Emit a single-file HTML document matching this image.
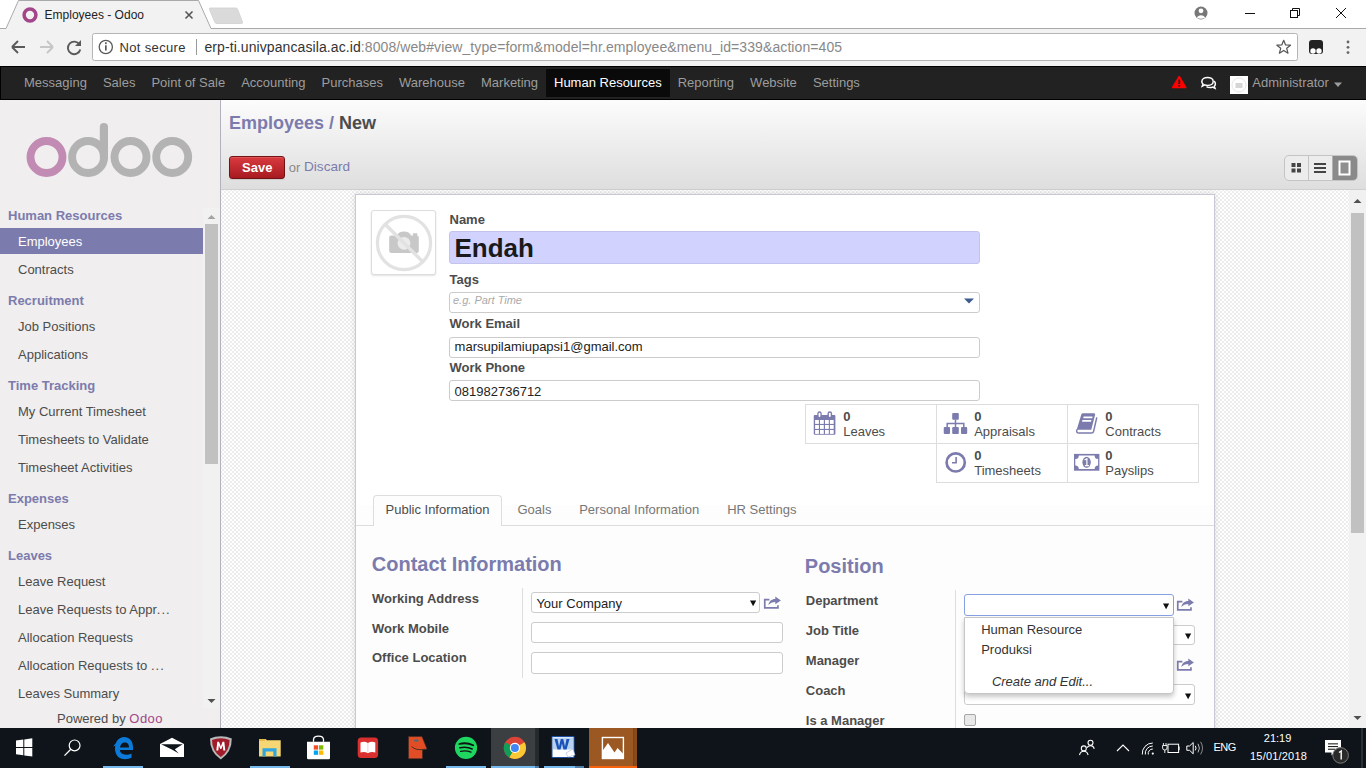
<!DOCTYPE html>
<html><head><meta charset="utf-8">
<style>
*{box-sizing:border-box;margin:0;padding:0}
html,body{width:1366px;height:768px;overflow:hidden;background:#fff;font-family:"Liberation Sans",sans-serif;font-size:13px;color:#4c4c4c}
.a{position:absolute}
.t{position:absolute;white-space:nowrap;line-height:1}
/* chrome */
#tabstrip{left:0;top:0;width:1366px;height:28px;background:#fff}
#toolbar{left:0;top:28px;width:1366px;height:38px;background:#f2f2f2;border-top:1px solid #b8b8b8}
#addr{left:92px;top:33px;width:1206px;height:28px;background:#fff;border:1px solid #c0c0c0;border-radius:2px}
/* odoo nav */
#nav{left:0;top:66px;width:1366px;height:34px;background:#222;border-top:1px solid #000;border-bottom:1px solid #000;border-left:1px solid #000}
.nv{position:absolute;top:75.7px;color:#9d9d9d;font-size:13px;line-height:1;white-space:nowrap}
/* sidebar */
#side{left:0;top:100px;width:221px;height:628px;background:#f0eeee;border-right:1px solid #b3b1bb}
.sh{position:absolute;left:8px;color:#7c7bad;font-weight:bold;font-size:13px;line-height:1;white-space:nowrap}
.si{position:absolute;left:18px;color:#4c4c4c;font-size:13px;line-height:1;white-space:nowrap}
/* header */
#hdr{left:221px;top:100px;width:1145px;height:90px;background:linear-gradient(#fcfcfc,#dedede);border-bottom:1px solid #cfcfcf}
#content{left:221px;top:190px;width:1128px;height:538px;background-color:#fff;background-image:repeating-conic-gradient(#ededed 0 25%,#fff 0 50%);background-size:4px 4px;background-position:3px 3px}
#vscroll{left:1349px;top:190px;width:17px;height:538px;background:#f1f1f1}
#sheet{left:355px;top:194px;width:860px;height:540px;background:#fff;border:1px solid #c9c9d6;box-shadow:0 0 6px rgba(0,0,0,.13)}
/* taskbar */
#task{left:0;top:728px;width:1366px;height:40px;background:#0e1419}
</style></head>
<body>

<svg class="a" style="left:0;top:0" width="1366" height="66">
  <path d="M0 28.5 H6 L18.5 0.5 H198.5 L211 28.5 H1366 V66 H0 Z" fill="#f2f2f2"/>
  <path d="M0 28.5 H6 L18.5 0.5 H198.5 L211 28.5 H1366" fill="none" stroke="#a9a9a9" stroke-width="1"/>
  <circle cx="30" cy="15" r="5.9" fill="none" stroke="#a24689" stroke-width="3.5"/>
  <path d="M185.5 11.5 L192.5 18.5 M192.5 11.5 L185.5 18.5" stroke="#555" stroke-width="1.6"/>
  <path d="M210 8 H236 Q237 8 237.5 9 L242.5 22 Q243 23.5 241.5 23.5 H216.5 Q215.5 23.5 215 22.5 L209.5 9.5 Q209 8 210 8 Z" fill="#dadada" stroke="#cfcfcf" stroke-width="0.8"/>
  <!-- window controls -->
  <circle cx="1201" cy="13" r="6.5" fill="#777"/>
  <circle cx="1201" cy="10.8" r="2.4" fill="#fff"/>
  <path d="M1196.6 17.6 Q1201 12.8 1205.4 17.6 Q1201 20 1196.6 17.6Z" fill="#fff"/>
  <path d="M1245 13.5 H1255" stroke="#111" stroke-width="1"/>
  <rect x="1290.5" y="10.5" width="7" height="7" fill="none" stroke="#111" stroke-width="1"/>
  <path d="M1292.5 10.5 V8.5 H1299.5 V15.5 H1297.5" fill="none" stroke="#111" stroke-width="1"/>
  <path d="M1336 8 L1346 18 M1346 8 L1336 18" stroke="#111" stroke-width="1"/>
  <!-- nav buttons -->
  <path d="M12 47 H25 M12 47 L18 41 M12 47 L18 53" fill="none" stroke="#5a5a5a" stroke-width="1.9"/>
  <path d="M53 47 H40 M53 47 L47 41 M53 47 L47 53" fill="none" stroke="#c6c6c6" stroke-width="1.9"/>
  <path d="M79.5 44.5 A6.3 6.3 0 1 0 80.3 49.5" fill="none" stroke="#5a5a5a" stroke-width="1.9"/>
  <path d="M81 40 V46 H75 Z" fill="#5a5a5a"/>
  <!-- address box -->
  <rect x="92.5" y="33.5" width="1205" height="27" rx="2" fill="#fff" stroke="#b5b5b5"/>
  <circle cx="105.8" cy="47" r="6.6" fill="none" stroke="#5a5a5a" stroke-width="1.3"/>
  <rect x="105" y="45.3" width="1.7" height="5.2" fill="#5a5a5a"/>
  <rect x="105" y="42.3" width="1.7" height="1.8" fill="#5a5a5a"/>
  <path d="M196.5 39 V55" stroke="#9a9a9a" stroke-width="1"/>
  <path d="M1283.7 40.3 L1285.6 45 L1290.5 45.2 L1286.7 48.3 L1288 53.2 L1283.7 50.4 L1279.4 53.2 L1280.7 48.3 L1276.9 45.2 L1281.8 45 Z" fill="none" stroke="#555" stroke-width="1.2" stroke-linejoin="round"/>
  <!-- extension icon -->
  <rect x="1309" y="40" width="14" height="14" rx="3" fill="#222"/>
  <circle cx="1313" cy="51" r="2.7" fill="#fff"/>
  <circle cx="1319" cy="51" r="2.7" fill="#fff"/>
  <circle cx="1348" cy="42" r="1.4" fill="#666"/>
  <circle cx="1348" cy="47.3" r="1.4" fill="#666"/>
  <circle cx="1348" cy="52.6" r="1.4" fill="#666"/>
</svg>
<div class="t" style="left:44.6px;top:9px;font-size:12px;color:#222">Employees - Odoo</div>
<div class="t" style="left:119.5px;top:40.7px;font-size:13px;color:#333;letter-spacing:0.35px">Not secure</div>
<div class="t" style="left:204.4px;top:39.9px;font-size:14px;color:#333;letter-spacing:0.09px">erp-ti.univpancasila.ac.id<span style="color:#888">:8008/web#view_type=form&amp;model=hr.employee&amp;menu_id=339&amp;action=405</span></div>
<div id="nav" class="a"></div>
<div class="nv" style="left:24.0px">Messaging</div>
<div class="nv" style="left:102.9px">Sales</div>
<div class="nv" style="left:151.4px">Point of Sale</div>
<div class="nv" style="left:241.2px">Accounting</div>
<div class="nv" style="left:321.5px">Purchases</div>
<div class="nv" style="left:398.9px">Warehouse</div>
<div class="nv" style="left:481.0px">Marketing</div>
<div class="a" style="left:546.0px;top:69px;width:123.7px;height:28px;background:#0a0a0a"></div>
<div class="nv" style="left:554.0px;color:#fff">Human Resources</div>
<div class="nv" style="left:677.7px">Reporting</div>
<div class="nv" style="left:750.1px">Website</div>
<div class="nv" style="left:812.9px">Settings</div>
<svg class="a" style="left:1160px;top:66px" width="206" height="34">
  <path d="M19.2 10.6 L25.6 21.4 H12.8 Z" fill="#f00" stroke="#f00" stroke-width="1.8" stroke-linejoin="round"/>
  <rect x="18.4" y="13.6" width="1.7" height="4.4" fill="#222"/>
  <rect x="18.4" y="19" width="1.7" height="1.6" fill="#222"/>
  <path d="M41.8 15.6 C41.8 12.6 45 11.4 47.6 11.4 C50.4 11.4 53.2 12.8 53.2 15.4 C53.2 18 50.4 19.4 47.6 19.4 C46.6 19.4 45.6 19.2 44.8 18.9 L42.2 20.2 L43 18 C42.2 17.4 41.8 16.6 41.8 15.6Z" fill="none" stroke="#fff" stroke-width="1.5"/>
  <path d="M46.5 20.6 C47.5 21.3 48.8 21.6 50 21.6 C51 21.6 51.9 21.4 52.6 21.1 L55 22.3 L54.3 20.2 C55 19.6 55.4 18.8 55.4 17.8 C55.4 16.6 54.9 15.8 54.1 15.2" fill="none" stroke="#fff" stroke-width="1.5"/>
  <rect x="70" y="10" width="18" height="18" fill="#fff"/>
  <circle cx="79" cy="19" r="7" fill="none" stroke="#e6e6e6" stroke-width="1"/>
  <rect x="75.5" y="17" width="7" height="5" fill="#d6d6d6"/>
  <path d="M174 16.5 H182 L178 21 Z" fill="#9d9d9d"/>
</svg>
<div class="nv" style="left:1252.3px">Administrator</div>
<div id="side" class="a"></div>
<svg class="a" style="left:0;top:100px" width="221" height="100">
  <circle cx="46.5" cy="57" r="16" fill="none" stroke="#c28bb4" stroke-width="7.9"/>
  <circle cx="88.1" cy="57" r="16" fill="none" stroke="#b3b3b3" stroke-width="7.9"/>
  <path d="M103.9 57 V27" stroke="#b3b3b3" stroke-width="8.2" stroke-linecap="round"/>
  <circle cx="130.5" cy="57" r="16" fill="none" stroke="#b3b3b3" stroke-width="7.9"/>
  <circle cx="172.2" cy="57" r="16" fill="none" stroke="#b3b3b3" stroke-width="7.9"/>
</svg>
<div class="a" style="left:203px;top:208px;width:17px;height:500px;background:#f1f1f1"></div>
<div class="a" style="left:205px;top:224px;width:13px;height:240px;background:#c1c1c1"></div>
<svg class="a" style="left:203px;top:208px" width="17" height="500">
  <path d="M4.5 11 L8.5 7 L12.5 11 Z" fill="#a3a3a3"/>
  <path d="M4.5 491 L8.5 495 L12.5 491 Z" fill="#505050"/>
</svg>
<div class="a" style="left:0;top:228px;width:203px;height:26px;background:#7c7bad"></div>
<div class="sh" style="top:209.2px">Human Resources</div>
<div class="si" style="top:234.5px;color:#fff">Employees</div>
<div class="si" style="top:262.6px">Contracts</div>
<div class="sh" style="top:293.8px">Recruitment</div>
<div class="si" style="top:319.7px">Job Positions</div>
<div class="si" style="top:347.6px">Applications</div>
<div class="sh" style="top:378.6px">Time Tracking</div>
<div class="si" style="top:404.7px">My Current Timesheet</div>
<div class="si" style="top:432.6px">Timesheets to Validate</div>
<div class="si" style="top:460.5px">Timesheet Activities</div>
<div class="sh" style="top:492.2px">Expenses</div>
<div class="si" style="top:518.0px">Expenses</div>
<div class="sh" style="top:549.1px">Leaves</div>
<div class="si" style="top:575.1px">Leave Request</div>
<div class="si" style="top:603.1px">Leave Requests to Appr<span style="letter-spacing:1px">...</span></div>
<div class="si" style="top:631.1px">Allocation Requests</div>
<div class="si" style="top:659.1px">Allocation Requests to <span style="letter-spacing:1px">...</span></div>
<div class="si" style="top:686.6px">Leaves Summary</div>
<div class="t" style="left:57px;top:711.8px;font-size:13px;color:#4c4c4c">Powered by <span style="color:#a24689;letter-spacing:0.5px">Odoo</span></div>
<div id="hdr" class="a"></div>
<div class="t" style="left:228.9px;top:113.5px;font-size:18px;font-weight:bold;color:#7c7bad">Employees <span style="font-weight:bold">/</span> <span style="color:#4c4c4c">New</span></div>
<div class="a" style="left:229px;top:156px;width:56px;height:23px;border:1px solid #731213;border-radius:3px;background:linear-gradient(#d93a3f,#a71b20);box-shadow:inset 0 1px 0 rgba(255,255,255,.15),0 1px 1px rgba(0,0,0,.1)"></div>
<div class="t" style="left:242.1px;top:160.8px;font-size:13px;font-weight:bold;color:#fff">Save</div>
<div class="t" style="left:288.8px;top:160.8px;font-size:13px;color:#888">or</div>
<div class="t" style="left:304px;top:160.3px;font-size:13.6px;color:#7c7bad">Discard</div>
<div class="a" style="left:1284px;top:155px;width:74px;height:26px;border:1px solid #c4c4c4;border-radius:5px;background:#ececec;overflow:hidden">
  <div class="a" style="left:23px;top:0;width:1px;height:24px;background:#c4c4c4"></div>
  <div class="a" style="left:47px;top:0;width:1px;height:24px;background:#b0b0b0"></div>
  <div class="a" style="left:48px;top:0;width:25px;height:24px;background:#8a8a8a"></div>
</div>
<svg class="a" style="left:1284px;top:155px" width="74" height="26">
  <rect x="7.5" y="8" width="4" height="4" fill="#444"/><rect x="13" y="8" width="4" height="4" fill="#444"/>
  <rect x="7.5" y="13.5" width="4" height="4" fill="#444"/><rect x="13" y="13.5" width="4" height="4" fill="#444"/>
  <rect x="30" y="8" width="12" height="2" fill="#444"/><rect x="30" y="12" width="12" height="2" fill="#444"/><rect x="30" y="16" width="12" height="2" fill="#444"/>
  <rect x="55.5" y="6.5" width="10" height="13" fill="#8f8f8f" stroke="#fff" stroke-width="2"/>
</svg>
<div id="content" class="a"></div>
<div id="vscroll" class="a"></div>
<div id="sheet" class="a"></div>
<div class="a" style="left:356.0px;top:505.0px;width:858.0px;height:223.0px;background:#fdfdfd"></div>
<div class="a" style="left:371.0px;top:210.0px;width:65.0px;height:65.0px;border:1px solid #ddd;border-radius:3px;background:#fff;box-shadow:0 1px 2px rgba(0,0,0,.12)"></div>
<svg class="a" style="left:371px;top:210px" width="65" height="65">
  <path d="M20.3 25.5 H26 Q27.5 21.5 33 21.5 Q38.5 21.5 40 25.5 H45.7 Q47.8 25.5 47.8 27.6 V41 Q47.8 43 45.7 43 H20.3 Q18.2 43 18.2 41 V27.6 Q18.2 25.5 20.3 25.5Z" fill="#c8c8c8"/>
  <rect x="41.8" y="23.3" width="4.6" height="2.6" rx="0.8" fill="#c8c8c8"/>
  <circle cx="33" cy="33.3" r="6.4" fill="#ebebeb"/>
  <circle cx="33" cy="33" r="26.6" fill="none" stroke="#e2e2e2" stroke-width="3.3"/>
  <path d="M14.2 14.2 L51.8 51.8" stroke="#e2e2e2" stroke-width="3.4"/>
</svg>
<div class="t" style="left:449.5px;top:212.7px;font-size:13px;font-weight:bold">Name</div>
<div class="a" style="left:449.0px;top:231.3px;width:531.0px;height:33.1px;background:#d2d2ff;border:1px solid #c3c3ee;border-radius:3px"></div>
<div class="t" style="left:454.5px;top:235.0px;font-size:26px;font-weight:bold;color:#1a1a1a">Endah</div>
<div class="t" style="left:449.5px;top:272.7px;font-size:13px;font-weight:bold">Tags</div>
<div class="a" style="left:449.0px;top:291.5px;width:531.0px;height:21.0px;background:#fff;border:1px solid #ccc;border-radius:3px"></div>
<div class="t" style="left:453.0px;top:295.3px;font-size:11px;font-style:italic;color:#aaa">e.g. Part Time</div>
<svg class="a" style="left:963px;top:298px" width="12" height="8"><path d="M1 0.5 H11 L6 5.5Z" fill="#3d5b8f"/></svg>
<div class="t" style="left:449.5px;top:317.3px;font-size:13px;font-weight:bold">Work Email</div>
<div class="a" style="left:449.0px;top:336.5px;width:531.0px;height:21.0px;background:#fff;border:1px solid #ccc;border-radius:3px"></div>
<div class="t" style="left:454.6px;top:340.1px;font-size:13px;color:#222">marsupilamiupapsi1@gmail.com</div>
<div class="t" style="left:449.5px;top:361.4px;font-size:13px;font-weight:bold">Work Phone</div>
<div class="a" style="left:449.0px;top:380.3px;width:531.0px;height:20.9px;background:#fff;border:1px solid #ccc;border-radius:3px"></div>
<div class="t" style="left:454.6px;top:384.8px;font-size:13px;color:#222">081982736712</div>
<div class="a" style="left:805.0px;top:404.0px;width:394.0px;height:40.0px;border:1px solid #ddd"></div>
<div class="a" style="left:936.0px;top:443.0px;width:263.0px;height:40.0px;border:1px solid #ddd"></div>
<div class="a" style="left:936.0px;top:404.0px;width:1.0px;height:79.0px;background:#ddd"></div>
<div class="a" style="left:1067.0px;top:404.0px;width:1.0px;height:79.0px;background:#ddd"></div>
<div class="t" style="left:843.2px;top:409.6px;font-size:13px;color:#4c4c4c;font-weight:bold">0</div>
<div class="t" style="left:843.2px;top:424.6px;font-size:13px;color:#4c4c4c">Leaves</div>
<div class="t" style="left:974.2px;top:409.6px;font-size:13px;color:#4c4c4c;font-weight:bold">0</div>
<div class="t" style="left:974.2px;top:424.6px;font-size:13px;color:#4c4c4c">Appraisals</div>
<div class="t" style="left:1105.3px;top:409.6px;font-size:13px;color:#4c4c4c;font-weight:bold">0</div>
<div class="t" style="left:1105.3px;top:424.6px;font-size:13px;color:#4c4c4c">Contracts</div>
<div class="t" style="left:974.2px;top:449.0px;font-size:13px;color:#4c4c4c;font-weight:bold">0</div>
<div class="t" style="left:974.2px;top:464.0px;font-size:13px;color:#4c4c4c">Timesheets</div>
<div class="t" style="left:1105.3px;top:449.0px;font-size:13px;color:#4c4c4c;font-weight:bold">0</div>
<div class="t" style="left:1105.3px;top:464.0px;font-size:13px;color:#4c4c4c">Payslips</div>
<svg class="a" style="left:805px;top:404px" width="394" height="79">
  <rect x="8.75" y="11.1" width="21.65" height="19.7" rx="1" fill="#7c7bad"/>
  <g fill="#fff"><rect x="10.1" y="16.0" width="3.8" height="3.9"/><rect x="10.1" y="21.0" width="3.8" height="3.9"/><rect x="10.1" y="26.0" width="3.8" height="3.9"/><rect x="15.0" y="16.0" width="3.8" height="3.9"/><rect x="15.0" y="21.0" width="3.8" height="3.9"/><rect x="15.0" y="26.0" width="3.8" height="3.9"/><rect x="20.0" y="16.0" width="3.8" height="3.9"/><rect x="20.0" y="21.0" width="3.8" height="3.9"/><rect x="20.0" y="26.0" width="3.8" height="3.9"/><rect x="24.9" y="16.0" width="3.8" height="3.9"/><rect x="24.9" y="21.0" width="3.8" height="3.9"/><rect x="24.9" y="26.0" width="3.8" height="3.9"/></g>
  <rect x="12.3" y="7.3" width="4.4" height="6.7" rx="2.2" fill="#7c7bad"/>
  <rect x="22.5" y="7.3" width="4.6" height="6.7" rx="2.2" fill="#7c7bad"/>
  <rect x="13.6" y="8.7" width="1.8" height="4.3" rx="0.9" fill="#fff"/>
  <rect x="23.9" y="8.7" width="1.8" height="4.3" rx="0.9" fill="#fff"/>
  <!-- org chart -->
  <rect x="147.2" y="9.1" width="6.6" height="6.6" rx="1" fill="#7c7bad"/>
  <path d="M150.5 15.5 V23 M142.2 23 V19.45 H158.8 V23" fill="none" stroke="#7c7bad" stroke-width="1.5"/>
  <rect x="138.75" y="23" width="6.25" height="6.9" rx="1" fill="#7c7bad"/>
  <rect x="147.2" y="23" width="6.6" height="6.9" rx="1" fill="#7c7bad"/>
  <rect x="156" y="23" width="6.2" height="6.9" rx="1" fill="#7c7bad"/>
  <!-- book -->
  <path d="M276.3 10.5 Q276.6 9.2 278 9.2 H289 Q290.5 9.2 290.1 10.7 L286.3 25.7 H271.7 Z" fill="#7c7bad"/>
  <path d="M272.2 25.2 Q270.5 29 274.2 29 H286.5 Q288.2 29 288.6 27.4 L291.8 13.4" fill="none" stroke="#7c7bad" stroke-width="1.5"/>
  <path d="M278.6 12.5 H287.6 L287.2 14.2 H278.2 Z" fill="#fff"/>
  <path d="M277.4 16 H286.4 L286 17.7 H277 Z" fill="#fff"/>
  <!-- clock -->
  <circle cx="150.7" cy="58.4" r="9.1" fill="none" stroke="#7c7bad" stroke-width="2.65"/>
  <path d="M151.1 53 V58.8 H147" fill="none" stroke="#7c7bad" stroke-width="1.6"/>
  <!-- money -->
  <rect x="269" y="49.9" width="25.4" height="16.8" fill="#7c7bad"/>
  <path d="M273.8 51.4 H289.6 A3.5 3.5 0 0 0 293.1 54.9 V61.6 A3.5 3.5 0 0 0 289.6 65.1 H273.8 A3.5 3.5 0 0 0 270.3 61.6 V54.9 A3.5 3.5 0 0 0 273.8 51.4Z" fill="#fff"/>
  <ellipse cx="281.6" cy="58.3" rx="4.2" ry="5.5" fill="#7c7bad"/>
  <path d="M279.6 56 L281.9 54.8 V61.6 M279.9 61.6 H283.9" fill="none" stroke="#fff" stroke-width="1.2"/>
</svg>
<div class="a" style="left:356.0px;top:525.0px;width:858.0px;height:1.0px;background:#ddd"></div>
<div class="a" style="left:372.5px;top:494.7px;width:129.5px;height:31px;background:#fdfdfd;border:1px solid #ddd;border-bottom:none;border-radius:4px 4px 0 0"></div>
<div class="t" style="left:385.5px;top:502.5px;font-size:13px;color:#4c4c4c">Public Information</div>
<div class="t" style="left:517.5px;top:502.5px;font-size:13px;color:#777">Goals</div>
<div class="t" style="left:579.2px;top:502.5px;font-size:13px;color:#777">Personal Information</div>
<div class="t" style="left:727.2px;top:502.5px;font-size:13px;color:#777">HR Settings</div>
<div class="t" style="left:371.8px;top:553.9px;font-size:20px;font-weight:bold;color:#7c7bad">Contact Information</div>
<div class="t" style="left:372.0px;top:591.6px;font-size:13px;font-weight:bold">Working Address</div>
<div class="t" style="left:372.0px;top:621.5px;font-size:13px;font-weight:bold">Work Mobile</div>
<div class="t" style="left:372.0px;top:651.2px;font-size:13px;font-weight:bold">Office Location</div>
<div class="a" style="left:522.0px;top:588.0px;width:1.0px;height:90.0px;background:#ddd"></div>
<div class="a" style="left:531.3px;top:592.3px;width:229.1px;height:21.1px;background:#fff;border:1px solid #ccc;border-radius:3px"></div>
<div class="t" style="left:536.4px;top:596.7px;font-size:13px;color:#222">Your Company</div>
<div class="a" style="left:531.3px;top:622.4px;width:251.5px;height:21.1px;background:#fff;border:1px solid #ccc;border-radius:3px"></div>
<div class="a" style="left:531.3px;top:652.1px;width:251.5px;height:21.6px;background:#fff;border:1px solid #ccc;border-radius:3px"></div>
<div class="t" style="left:804.8px;top:555.8px;font-size:20px;font-weight:bold;color:#7c7bad">Position</div>
<div class="t" style="left:805.8px;top:593.7px;font-size:13px;font-weight:bold">Department</div>
<div class="t" style="left:805.8px;top:623.6px;font-size:13px;font-weight:bold">Job Title</div>
<div class="t" style="left:805.8px;top:653.7px;font-size:13px;font-weight:bold">Manager</div>
<div class="t" style="left:805.8px;top:683.8px;font-size:13px;font-weight:bold">Coach</div>
<div class="t" style="left:805.8px;top:713.5px;font-size:13px;font-weight:bold">Is a Manager</div>
<div class="a" style="left:955.0px;top:589.6px;width:1.0px;height:138.4px;background:#ddd"></div>
<div class="a" style="left:964.1px;top:624.8px;width:231.4px;height:20.7px;background:#fff;border:1px solid #ccc;border-radius:3px"></div>
<div class="a" style="left:964.1px;top:654.5px;width:209.7px;height:21.0px;background:#fff;border:1px solid #ccc;border-radius:3px"></div>
<div class="a" style="left:964.1px;top:684.3px;width:231.4px;height:21.0px;background:#fff;border:1px solid #ccc;border-radius:3px"></div>
<div class="a" style="left:964.1px;top:594.1px;width:209.7px;height:21.5px;background:#fff;border:1px solid #86a0e3;border-radius:3px"></div>
<div class="a" style="left:964.1px;top:714.0px;width:11.9px;height:11.5px;background:#e8e8e8;border:1px solid #a6a6a6;border-radius:2px"></div>
<svg class="a" style="left:749.6px;top:600.3px" width="7" height="7"><path d="M0 0.5 H6.2 L3.1 6.3Z" fill="#111"/></svg>
<svg class="a" style="left:763.0px;top:595.0px" width="20" height="16"><path d="M6.4 4.7 H1.75 V12.9 H14.95 V10.2" fill="none" stroke="#7c7bad" stroke-width="1.7"/><path d="M5.3 10 C6 6.3 8.6 4 12.3 4 V1.5 L17.9 5.4 L12.3 9.3 V6.9 C9.5 6.9 7.2 7.8 5.3 10 Z" fill="#7c7bad"/></svg>
<svg class="a" style="left:1162.6px;top:602.6px" width="7" height="7"><path d="M0 0.5 H6.2 L3.1 6.3Z" fill="#111"/></svg>
<svg class="a" style="left:1175.9px;top:596.6px" width="20" height="16"><path d="M6.4 4.7 H1.75 V12.9 H14.95 V10.2" fill="none" stroke="#7c7bad" stroke-width="1.7"/><path d="M5.3 10 C6 6.3 8.6 4 12.3 4 V1.5 L17.9 5.4 L12.3 9.3 V6.9 C9.5 6.9 7.2 7.8 5.3 10 Z" fill="#7c7bad"/></svg>
<svg class="a" style="left:1175.9px;top:657.3px" width="20" height="16"><path d="M6.4 4.7 H1.75 V12.9 H14.95 V10.2" fill="none" stroke="#7c7bad" stroke-width="1.7"/><path d="M5.3 10 C6 6.3 8.6 4 12.3 4 V1.5 L17.9 5.4 L12.3 9.3 V6.9 C9.5 6.9 7.2 7.8 5.3 10 Z" fill="#7c7bad"/></svg>
<svg class="a" style="left:1185.2px;top:633.0px" width="7" height="7"><path d="M0 0.5 H6.2 L3.1 6.3Z" fill="#111"/></svg>
<svg class="a" style="left:1185.2px;top:693.0px" width="7" height="7"><path d="M0 0.5 H6.2 L3.1 6.3Z" fill="#111"/></svg>
<div class="a" style="left:964.1px;top:617.0px;width:209.7px;height:77.0px;background:#fff;border:1px solid #c6c6c6;border-radius:0 0 4px 4px;box-shadow:0 3px 5px rgba(0,0,0,.22)"></div>
<div class="t" style="left:981.2px;top:622.5px;font-size:13px;color:#333">Human Resource</div>
<div class="t" style="left:981.2px;top:643.3px;font-size:13px;color:#333">Produksi</div>
<div class="t" style="left:991.9px;top:674.5px;font-size:13px;color:#333;font-style:italic">Create and Edit...</div>
<div class="a" style="left:1351.0px;top:213.0px;width:13.0px;height:320.0px;background:#c1c1c1"></div>
<svg class="a" style="left:1349px;top:190px" width="17" height="538"><path d="M4.5 13 L8.5 9 L12.5 13Z" fill="#505050"/><path d="M4.5 526 L8.5 530 L12.5 526Z" fill="#505050"/></svg>
<div id="task" class="a"></div>
<svg class="a" style="left:0;top:728px" width="1366" height="40">
  <!-- slot highlights -->
  <rect x="491" y="0" width="44.6" height="38" fill="#3b3f42"/>
  <rect x="535.6" y="0" width="3.4" height="38" fill="#25292c"/>
  <rect x="589" y="0" width="44.7" height="38" fill="#9b5822"/>
  <rect x="633.7" y="0" width="3.3" height="38" fill="#874b1b"/>
  <!-- underlines -->
  <rect x="103" y="38" width="40" height="2" fill="#76b9ed"/>
  <rect x="250" y="38" width="40" height="2" fill="#76b9ed"/>
  <rect x="446" y="38" width="40" height="2" fill="#76b9ed"/>
  <rect x="491" y="38" width="44.6" height="2" fill="#76b9ed"/>
  <rect x="535.6" y="38" width="3.4" height="2" fill="#4f7fa8"/>
  <rect x="544" y="38" width="31" height="2" fill="#76b9ed"/>
  <rect x="575" y="38" width="9" height="2" fill="#4f7fa8"/>
  <rect x="589" y="38" width="48" height="2" fill="#f7630c"/>
  <!-- windows logo -->
  <path d="M16 12.5 L23.3 11.5 V18.9 H16Z M24.3 11.4 L32.3 10.3 V18.9 H24.3Z M16 19.9 H23.3 V27.3 L16 26.3Z M24.3 19.9 H32.3 V28.4 L24.3 27.4Z" fill="#fff"/>
  <!-- search -->
  <circle cx="74.6" cy="17.4" r="5.4" fill="none" stroke="#fff" stroke-width="1.2"/>
  <path d="M70.8 21.2 L64.5 27.6" stroke="#fff" stroke-width="1.3"/>
  <!-- edge -->
  <path d="M133 22.1 V19.5 C133 12.5 129 9 124.2 9 C118.5 9 115 14 115 20.5 C115 27.5 119.3 31.2 125 31.2 C127.8 31.2 130 30.5 131.5 29.6 V25.5 C130 26.3 128 26.8 126 26.8 C122.5 26.8 120.2 25 119.8 22.1 Z" fill="#0b7ad8"/>
  <path d="M120 19.4 C120.5 16.3 122.3 14.6 124.8 14.6 C127.5 14.6 129 16.4 129 19.4 Z" fill="#0e1419"/>
  <path d="M113.2 18.8 C114.5 15.6 117.5 14 121.2 14.4 C118.2 15.4 116 16.8 113.2 18.8 Z" fill="#0b7ad8"/>
  <!-- mail -->
  <path d="M160 15.9 L172 9.7 L184 15.9 V29.1 H160Z" fill="#fff"/>
  <path d="M161.1 16.3 H182.7 L174.8 21.3 L178.8 25.5 L172.3 21.7 Z" fill="#0e1419"/>
  <!-- mcafee -->
  <path d="M210 10.5 Q215 8.3 220.8 8.3 Q226.6 8.3 231.8 10.5 Q232 24 220.8 31.5 Q209.6 24 210 10.5Z" fill="#b8b8b8"/>
  <path d="M212 12 Q216 10.3 220.8 10.3 Q225.6 10.3 229.6 12 Q229.6 23 220.8 29 Q212 23 212 12Z" fill="#a01c2a"/>
  <path d="M216.3 22.5 L217.3 13.8 H219 L220.8 18.5 L222.6 13.8 H224.3 L225.3 22.5 H223.3 L222.8 17.5 L221.3 21 H220.3 L218.8 17.5 L218.3 22.5Z" fill="#fff"/>
  <!-- explorer -->
  <path d="M259 11 H265.5 L267 12.3 H280.7 V28.4 H259Z" fill="#f7d674"/>
  <rect x="259" y="11" width="6" height="2" fill="#e8b84c"/>
  <path d="M262.5 28.4 V20.3 H276.5 V28.4 H273.3 V23.5 H265.7 V28.4Z" fill="#2fa6e3"/>
  <!-- store -->
  <path d="M307 13.8 H330 V30 Q330 31.2 328.8 31.2 H308.2 Q307 31.2 307 30Z" fill="#fff"/>
  <path d="M313.5 13.8 V11.8 Q313.5 8.2 318.5 8.2 Q323.5 8.2 323.5 11.8 V13.8" fill="none" stroke="#fff" stroke-width="1.3"/>
  <rect x="313.8" y="17.3" width="4.3" height="4.3" fill="#f25022"/><rect x="319" y="17.3" width="4.3" height="4.3" fill="#7fba00"/>
  <rect x="313.8" y="22.5" width="4.3" height="4.3" fill="#00a4ef"/><rect x="319" y="22.5" width="4.3" height="4.3" fill="#ffb900"/>
  <!-- books -->
  <rect x="357.7" y="9.6" width="20.4" height="20.5" rx="3.5" fill="#d92f2f"/>
  <path d="M360.5 14.5 Q364.5 13 367.9 15 Q371.3 13 375.3 14.5 V24.5 Q371.3 23.2 367.9 25.2 Q364.5 23.2 360.5 24.5Z" fill="#fff"/>
  <path d="M367.9 15 V25" stroke="#e8b0b0" stroke-width="0.6"/>
  <!-- reader -->
  <path d="M408.5 8.6 H422 L427 21 L422.5 22 V30.7 H408.5Z" fill="#e34d26" stroke="#3a2a24" stroke-width="0.6"/>
  <ellipse cx="416.3" cy="12.6" rx="2.6" ry="1.4" fill="#666"/>
  <path d="M411.5 18.5 Q416 23 425 21.2" fill="none" stroke="#3a2a24" stroke-width="0.9"/>
  <!-- spotify -->
  <circle cx="466" cy="19.8" r="11.1" fill="#1ed760"/>
  <path d="M459.3 16 Q466.5 14 473.2 17.3" fill="none" stroke="#111" stroke-width="1.8" stroke-linecap="round"/>
  <path d="M459.9 19.8 Q466.3 18.2 472.2 20.9" fill="none" stroke="#111" stroke-width="1.6" stroke-linecap="round"/>
  <path d="M460.6 23.3 Q466 22 471 24.2" fill="none" stroke="#111" stroke-width="1.3" stroke-linecap="round"/>
  <!-- chrome -->
  <circle cx="514.9" cy="19.9" r="11.1" fill="#db4437"/>
  <path d="M514.9 19.9 L505.3 14.35 A11.1 11.1 0 0 0 509.35 29.5Z" fill="#0f9d58"/>
  <path d="M514.9 19.9 L509.35 29.5 A11.1 11.1 0 0 0 526 19.9 H514.9Z" fill="#fcc934"/>
  <path d="M514.9 19.9 H526 A11.1 11.1 0 0 0 524.5 14.35Z" fill="#fcc934"/>
  <circle cx="514.9" cy="19.9" r="5.1" fill="#fff"/>
  <circle cx="514.9" cy="19.9" r="4" fill="#4285f4"/>
  <!-- word -->
  <path d="M552 8.5 H574 V29.5 H552Z" fill="#fff"/>
  <path d="M552 8.5 H574 V29.5 H552Z" fill="none" stroke="#1d4fa0" stroke-width="1"/>
  <rect x="553" y="9.5" width="20" height="12" fill="#b7d2f0"/>
  <path d="M554.5 11 H557.5 L559 18.5 L560.8 11 H563.2 L565 18.5 L566.5 11 H569.5 L566.5 21.5 H563.5 L562 15.5 L560.5 21.5 H557.5Z" fill="#1b53b8"/>
  <path d="M566 25 L573 21 L575 27 L568 29Z" fill="#fff" stroke="#9fb8d8" stroke-width="0.6"/>
  <!-- photos -->
  <rect x="602.4" y="9.5" width="21" height="21" fill="none" stroke="#fff" stroke-width="1.4"/>
  <path d="M602.4 30.5 V23 L608 15 L614.5 24.5 L617.5 20 L623.4 26 V30.5Z" fill="#fff"/>
  <!-- tray: people -->
  <circle cx="1083.8" cy="20.4" r="2.5" fill="none" stroke="#fff" stroke-width="1.1"/>
  <path d="M1079.5 27 Q1080.5 23.3 1083.8 23.3 Q1087.1 23.3 1088.1 27" fill="none" stroke="#fff" stroke-width="1.1"/>
  <circle cx="1090.5" cy="14.8" r="2.5" fill="none" stroke="#fff" stroke-width="1.1"/>
  <path d="M1087 19.8 Q1088 17.6 1090.5 17.6 Q1093.5 17.6 1094.2 20.9" fill="none" stroke="#fff" stroke-width="1.1"/>
  <!-- chevron -->
  <path d="M1117 23 L1123 17 L1129 23" fill="none" stroke="#fff" stroke-width="1.1"/>
  <!-- wifi -->
  <circle cx="1152.8" cy="25.6" r="1.1" fill="#fff"/>
  <path d="M1142.3 26.5 A10.5 10.5 0 0 1 1152.8 15" fill="none" stroke="#fff" stroke-width="1"/>
  <path d="M1145.3 26.5 A7.5 7.5 0 0 1 1152.8 18" fill="none" stroke="#fff" stroke-width="1"/>
  <path d="M1148.3 26.5 A4.5 4.5 0 0 1 1152.8 21" fill="none" stroke="#fff" stroke-width="1"/>
  <!-- battery -->
  <rect x="1168" y="16.2" width="10.6" height="8.3" fill="none" stroke="#fff" stroke-width="1"/>
  <rect x="1178.6" y="18.5" width="1" height="3.6" fill="#fff"/>
  <path d="M1163.4 15 V17.5 M1166 15 V17.5 M1162.6 17.5 H1167 V20 Q1167 22 1164.8 22 Q1162.6 22 1162.6 20Z M1164.8 22 V25" fill="none" stroke="#fff" stroke-width="0.9"/>
  <!-- volume -->
  <path d="M1186.8 18 H1189.6 L1193.2 14.5 V25.8 L1189.6 22.3 H1186.8Z" fill="none" stroke="#fff" stroke-width="1"/>
  <path d="M1195.3 17.8 Q1196.8 20.1 1195.3 22.4" fill="none" stroke="#fff" stroke-width="1"/>
  <path d="M1198 15.8 Q1200.8 20.1 1198 24.4" fill="none" stroke="#ccc" stroke-width="0.9"/>
  <path d="M1200.6 13.8 Q1204.4 20.1 1200.6 26.4" fill="none" stroke="#999" stroke-width="0.9"/>
  <!-- notifications -->
  <path d="M1325 12 H1341 V24.6 H1334.5 L1331.5 27.6 V24.6 H1325Z" fill="#fff"/>
  <rect x="1328" y="15.3" width="10" height="1.1" fill="#222"/><rect x="1328" y="18" width="10" height="1.1" fill="#222"/><rect x="1328" y="20.7" width="7.5" height="1.1" fill="#222"/>
  <circle cx="1340.6" cy="27.4" r="7.8" fill="#2a2a2a" stroke="#7b7b7b" stroke-width="1"/>
  <path d="M1339 24.5 L1341.2 23 V31.5" fill="none" stroke="#fff" stroke-width="1.4"/>
  <rect x="1361.5" y="0" width="1" height="40" fill="#4a4f54"/>
</svg>
<div class="t" style="left:1213.4px;top:742.2px;font-size:11px;color:#fff;letter-spacing:-0.45px">ENG</div>
<div class="t" style="left:1263.8px;top:733.4px;font-size:11px;color:#fff">21:19</div>
<div class="t" style="left:1250px;top:751.1px;font-size:11px;color:#fff;letter-spacing:0.2px">15/01/2018</div>
</body></html>
